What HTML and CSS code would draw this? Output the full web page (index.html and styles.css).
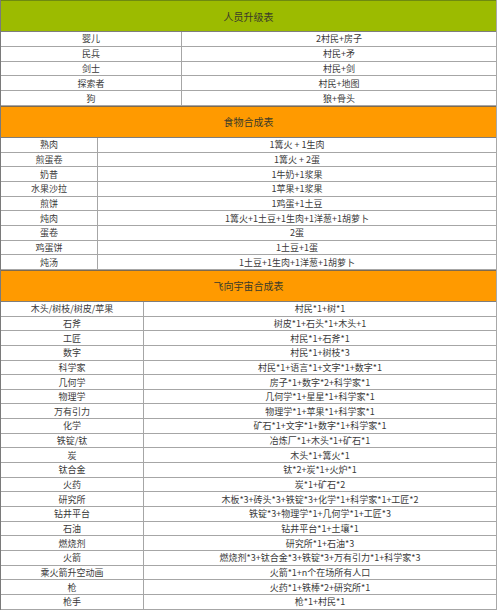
FILE: index.html
```html
<!DOCTYPE html>
<html lang="zh">
<head>
<meta charset="utf-8">
<link rel="stylesheet" href="styles.css">
</head>
<body>
<div class="sheet">
  <section class="sec sec-people">
    <div class="head green">人员升级表</div>
    <div class="row"><div class="c l">婴儿</div><div class="c">2村民+房子</div></div>
    <div class="row"><div class="c l">民兵</div><div class="c">村民+矛</div></div>
    <div class="row"><div class="c l">剑士</div><div class="c">村民+剑</div></div>
    <div class="row"><div class="c l">探索者</div><div class="c">村民+地图</div></div>
    <div class="row"><div class="c l">狗</div><div class="c">狼+骨头</div></div>
  </section>
  <section class="sec sec-food">
    <div class="head orange">食物合成表</div>
    <div class="row"><div class="c l">熟肉</div><div class="c">1篝火 + 1生肉</div></div>
    <div class="row"><div class="c l">煎蛋卷</div><div class="c">1篝火 + 2蛋</div></div>
    <div class="row"><div class="c l">奶昔</div><div class="c">1牛奶+1浆果</div></div>
    <div class="row"><div class="c l">水果沙拉</div><div class="c">1苹果+1浆果</div></div>
    <div class="row"><div class="c l">煎饼</div><div class="c">1鸡蛋+1土豆</div></div>
    <div class="row"><div class="c l">炖肉</div><div class="c">1篝火+1土豆+1生肉+1洋葱+1胡萝卜</div></div>
    <div class="row"><div class="c l">蛋卷</div><div class="c">2蛋</div></div>
    <div class="row"><div class="c l">鸡蛋饼</div><div class="c">1土豆+1蛋</div></div>
    <div class="row"><div class="c l">炖汤</div><div class="c">1土豆+1生肉+1洋葱+1胡萝卜</div></div>
  </section>
  <section class="sec sec-space">
    <div class="head orange">飞向宇宙合成表</div>
    <div class="row"><div class="c l">木头/树枝/树皮/苹果</div><div class="c">村民*1+树*1</div></div>
    <div class="row"><div class="c l">石斧</div><div class="c">树皮*1+石头*1+木头+1</div></div>
    <div class="row"><div class="c l">工匠</div><div class="c">村民*1+石斧*1</div></div>
    <div class="row"><div class="c l">数字</div><div class="c">村民*1+树枝*3</div></div>
    <div class="row"><div class="c l">科学家</div><div class="c">村民*1+语言*1+文字*1+数字*1</div></div>
    <div class="row"><div class="c l">几何学</div><div class="c">房子*1+数字*2+科学家*1</div></div>
    <div class="row"><div class="c l">物理学</div><div class="c">几何学*1+星星*1+科学家*1</div></div>
    <div class="row"><div class="c l">万有引力</div><div class="c">物理学*1+苹果*1+科学家*1</div></div>
    <div class="row"><div class="c l">化学</div><div class="c">矿石*1+文字*1+数字*1+科学家*1</div></div>
    <div class="row"><div class="c l">铁锭/钛</div><div class="c">冶炼厂*1+木头*1+矿石*1</div></div>
    <div class="row"><div class="c l">炭</div><div class="c">木头*1+篝火*1</div></div>
    <div class="row"><div class="c l">钛合金</div><div class="c">钛*2+炭*1+火炉*1</div></div>
    <div class="row"><div class="c l">火药</div><div class="c">炭*1+矿石*2</div></div>
    <div class="row"><div class="c l">研究所</div><div class="c">木板*3+砖头*3+铁锭*3+化学*1+科学家*1+工匠*2</div></div>
    <div class="row"><div class="c l">钻井平台</div><div class="c">铁锭*3+物理学*1+几何学*1+工匠*3</div></div>
    <div class="row"><div class="c l">石油</div><div class="c">钻井平台*1+土壤*1</div></div>
    <div class="row"><div class="c l">燃烧剂</div><div class="c">研究所*1+石油*3</div></div>
    <div class="row"><div class="c l">火箭</div><div class="c">燃烧剂*3+钛合金*3+铁锭*3+万有引力*1+科学家*3</div></div>
    <div class="row"><div class="c l">乘火箭升空动画</div><div class="c">火箭*1+n个在场所有人口</div></div>
    <div class="row"><div class="c l">枪</div><div class="c">火药*1+铁棒*2+研究所*1</div></div>
    <div class="row"><div class="c l">枪手</div><div class="c">枪*1+村民*1</div></div>
  </section>
</div>
</body>
</html>
```

FILE: styles.css
```css
html, body {
  margin: 0;
  padding: 0;
  background: #ffffff;
}
body {
  font-family: "Noto Sans CJK SC", "Noto Sans", sans-serif;
  font-size: 9px;
  color: #3a3a3a;
}
.sheet {
  width: 497px;
  border-left: 1px solid #7a7a7a;
  border-right: 1px solid #a8a8a8;
  box-sizing: border-box;
}
.sec {
  display: flex;
  flex-direction: column;
}
.head {
  height: 32px;
  box-sizing: border-box;
  display: flex;
  align-items: center;
  justify-content: center;
  border-top: 1px solid #6f6f4a;
  border-bottom: 1px solid #7e7e7e;
  color: #3a3a2a;
  font-size: 10px;
}
.green {
  background: #9cbb00;
  border-top-color: #6e8a10;
}
.orange {
  background: #ff9a00;
  border-top-color: #7d6a50;
}
.row {
  height: 14.67px;
  box-sizing: border-box;
  display: grid;
  border-bottom: 1px solid #a6a6a6;
}
.sec-people .row { grid-template-columns: 181px 1fr; height: 14.8px; }
.sec-food .row { grid-template-columns: 97px 1fr; }
.sec-space .row { grid-template-columns: 143px 1fr; }
.c {
  display: flex;
  align-items: center;
  justify-content: center;
  white-space: nowrap;
  line-height: 1;
}
.l {
  border-right: 1px solid #a6a6a6;
}
```
